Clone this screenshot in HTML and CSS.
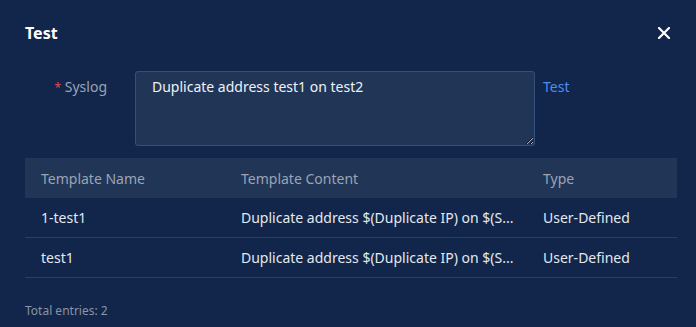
FILE: index.html
```html
<!DOCTYPE html>
<html lang="en">
<head>
  <meta charset="UTF-8">
  <meta name="viewport" content="width=device-width, initial-scale=1.0">
  <title>Test</title>
  <link rel="stylesheet" href="styles.css">
</head>
<body>
  <div class="dialog">
    <div class="dialog-head">
      <span class="dialog-title">Test</span>
      <span class="dialog-close">
        <svg width="12" height="12" viewBox="0 0 12 12"><path d="M1 1 L11 11 M11 1 L1 11" stroke="#ffffff" stroke-width="2.2" stroke-linecap="round"/></svg>
      </span>
    </div>
    <div class="form-row">
      <label class="form-label"><span class="req">*</span> Syslog</label>
      <textarea class="syslog" readonly>Duplicate address test1 on test2</textarea>
      <a class="link" href="#">Test</a>
    </div>
    <table class="grid">
      <thead>
        <tr><th class="c-name">Template Name</th><th class="c-content">Template Content</th><th class="c-type">Type</th></tr>
      </thead>
      <tbody>
        <tr><td>1-test1</td><td class="ellipsis">Duplicate address $(Duplicate IP) on $(S...</td><td>User-Defined</td></tr>
        <tr><td>test1</td><td class="ellipsis">Duplicate address $(Duplicate IP) on $(S...</td><td>User-Defined</td></tr>
      </tbody>
    </table>
    <div class="total">Total entries: 2</div>
  </div>
</body>
</html>
```
FILE: styles.css
```css
html, body {
  margin: 0;
  background: #11264a;
}
.dialog {
  font-family: "Noto Sans", "Open Sans", sans-serif;
  font-size: 14px;
  color: #e4e8ef;
  padding: 0 19px 0 25px;
}
.dialog-head {
  display: flex;
  justify-content: space-between;
  align-items: center;
  height: 26px;
  padding: 20px 7px 25px 0;
}
.dialog-title {
  font-size: 16px;
  font-weight: bold;
  color: #ffffff;
}
.dialog-close {
  display: flex;
}
.form-row {
  display: flex;
  align-items: flex-start;
}
.form-label {
  width: 110px;
  box-sizing: border-box;
  padding: 6px 28px 0 0;
  text-align: right;
  line-height: 20px;
  color: #9aa4b5;
}
.req {
  color: #e04b4b;
  font-size: 12px;
}
.syslog {
  width: 400px;
  height: 75px;
  box-sizing: border-box;
  margin: 0;
  padding: 5px 16px;
  background: #213657;
  border: 1px solid #34507a;
  border-radius: 3px;
  color: #eef1f5;
  font-family: inherit;
  font-size: 14px;
  line-height: 20px;
  resize: both;
  outline: none;
}
.link {
  margin-left: 8px;
  padding-top: 6px;
  line-height: 20px;
  color: #4d8cf0;
  text-decoration: none;
}
.grid {
  width: 100%;
  margin-top: 12px;
  border-collapse: collapse;
  table-layout: fixed;
}
.grid th {
  background: #213657;
  color: #9aa4b5;
  font-weight: normal;
  text-align: left;
  height: 40px;
  padding: 0 8px 0 16px;
}
.grid td {
  height: 39px;
  padding: 0 8px 0 16px;
  border-bottom: 1px solid #243f68;
}
.c-name {
  width: 176px;
}
.c-content {
  width: 278px;
}
.ellipsis {
  white-space: nowrap;
  overflow: hidden;
  text-overflow: ellipsis;
}
.total {
  margin-top: 24px;
  font-size: 12px;
  color: #8a94a6;
}
```
